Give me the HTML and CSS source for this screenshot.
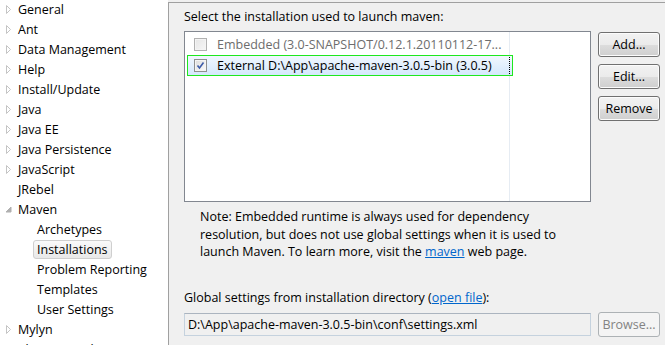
FILE: index.html
```html
<!DOCTYPE html>
<html>
<head>
<meta charset="utf-8">
<link rel="stylesheet" href="styles.css">
</head>
<body>
<div class="window">
  <div class="tree">
    <div class="row l0"><span class="tw"><svg width="6" height="9" viewBox="0 0 6 9"><path d="M1.5 0.5 L5.5 4.5 L1.5 8.5 Z" fill="none" stroke="#c4c4c4"/></svg></span><span class="lbl">General</span></div>
    <div class="row l0"><span class="tw"><svg width="6" height="9" viewBox="0 0 6 9"><path d="M1.5 0.5 L5.5 4.5 L1.5 8.5 Z" fill="none" stroke="#c4c4c4"/></svg></span><span class="lbl">Ant</span></div>
    <div class="row l0"><span class="tw"><svg width="6" height="9" viewBox="0 0 6 9"><path d="M1.5 0.5 L5.5 4.5 L1.5 8.5 Z" fill="none" stroke="#c4c4c4"/></svg></span><span class="lbl">Data Management</span></div>
    <div class="row l0"><span class="tw"><svg width="6" height="9" viewBox="0 0 6 9"><path d="M1.5 0.5 L5.5 4.5 L1.5 8.5 Z" fill="none" stroke="#c4c4c4"/></svg></span><span class="lbl">Help</span></div>
    <div class="row l0"><span class="tw"><svg width="6" height="9" viewBox="0 0 6 9"><path d="M1.5 0.5 L5.5 4.5 L1.5 8.5 Z" fill="none" stroke="#c4c4c4"/></svg></span><span class="lbl">Install/Update</span></div>
    <div class="row l0"><span class="tw"><svg width="6" height="9" viewBox="0 0 6 9"><path d="M1.5 0.5 L5.5 4.5 L1.5 8.5 Z" fill="none" stroke="#c4c4c4"/></svg></span><span class="lbl">Java</span></div>
    <div class="row l0"><span class="tw"><svg width="6" height="9" viewBox="0 0 6 9"><path d="M1.5 0.5 L5.5 4.5 L1.5 8.5 Z" fill="none" stroke="#c4c4c4"/></svg></span><span class="lbl">Java EE</span></div>
    <div class="row l0"><span class="tw"><svg width="6" height="9" viewBox="0 0 6 9"><path d="M1.5 0.5 L5.5 4.5 L1.5 8.5 Z" fill="none" stroke="#c4c4c4"/></svg></span><span class="lbl">Java Persistence</span></div>
    <div class="row l0"><span class="tw"><svg width="6" height="9" viewBox="0 0 6 9"><path d="M1.5 0.5 L5.5 4.5 L1.5 8.5 Z" fill="none" stroke="#c4c4c4"/></svg></span><span class="lbl">JavaScript</span></div>
    <div class="row l0"><span class="tw"></span><span class="lbl">JRebel</span></div>
    <div class="row l0"><span class="tw"><svg width="7" height="7" viewBox="0 0 7 7"><path d="M6 1 L6 6 L1 6 Z" fill="#b0b0b0" stroke="#b0b0b0" stroke-linejoin="round"/></svg></span><span class="lbl">Maven</span></div>
    <div class="row l1"><span class="lbl">Archetypes</span></div>
    <div class="row l1"><span class="lbl sel">Installations</span></div>
    <div class="row l1"><span class="lbl">Problem Reporting</span></div>
    <div class="row l1"><span class="lbl">Templates</span></div>
    <div class="row l1"><span class="lbl">User Settings</span></div>
    <div class="row l0"><span class="tw"><svg width="6" height="9" viewBox="0 0 6 9"><path d="M1.5 0.5 L5.5 4.5 L1.5 8.5 Z" fill="none" stroke="#c4c4c4"/></svg></span><span class="lbl">Mylyn</span></div>
    <div class="row l0"><span class="tw"><svg width="6" height="9" viewBox="0 0 6 9"><path d="M1.5 0.5 L5.5 4.5 L1.5 8.5 Z" fill="none" stroke="#c4c4c4"/></svg></span><span class="lbl">Plug-in Development</span></div>
  </div>
  <div class="panel">
    <div class="label">Select the installation used to launch maven:</div>
    <div class="inst">
      <div class="list">
        <div class="col">
          <div class="item">
            <span class="cb dis"></span>
            <span class="itext dim">Embedded (3.0-SNAPSHOT/0.12.1.20110112-17...</span>
          </div>
          <div class="item selected">
            <span class="cb"><svg width="11" height="11" viewBox="0 0 11 11"><path d="M2.5 5.5 L4.5 8 L8.5 2.5" fill="none" stroke="#3c5ba8" stroke-width="1.6"/></svg></span>
            <span class="itext">External D:\App\apache-maven-3.0.5-bin (3.0.5)</span>
          </div>
        </div>
      </div>
      <div class="buttons">
        <div class="btn">Add...</div>
        <div class="btn">Edit...</div>
        <div class="btn">Remove</div>
      </div>
    </div>
    <p class="note">Note: Embedded runtime is always used for dependency<br>resolution, but does not use global settings when it is used to<br>launch Maven. To learn more, visit the <a class="link">maven</a> web page.</p>
    <div class="label2">Global settings from installation directory (<a class="link">open file</a>):</div>
    <div class="field-row">
      <div class="field">D:\App\apache-maven-3.0.5-bin\conf\settings.xml</div>
      <div class="btn disabled">Browse...</div>
    </div>
  </div>
</div>
</body>
</html>
```

FILE: styles.css
```css
html, body {
  margin: 0;
  padding: 0;
}
body {
  width: 665px;
  height: 345px;
  overflow: hidden;
  background: #f0f0f0;
  font-family: "Open Sans", "Noto Sans", sans-serif;
  font-size: 12.5px;
  color: #000;
}
.window {
  display: flex;
  height: 345px;
}
.tree {
  width: 168px;
  flex: none;
  background: #fff;
  margin-top: -1px;
}
.row {
  height: 20px;
  display: flex;
  align-items: center;
  white-space: nowrap;
}
.tw {
  width: 18px;
  flex: none;
  display: flex;
  align-items: center;
  padding-left: 5px;
  box-sizing: border-box;
}
.l1 {
  padding-left: 33px;
}
.l1 .lbl {
  padding: 0 3px;
  border: 1px solid transparent;
  line-height: 17px;
}
.lbl.sel {
  border: 1px solid #cfcfcf;
  border-radius: 3px;
  background: linear-gradient(#fafafa, #e8e8e8);
}
.panel {
  flex: 1;
  margin-top: 2px;
  border-top: 1px solid #a0a0a0;
  border-left: 1px solid #a0a0a0;
  padding-left: 15px;
}
.label {
  margin-top: 6px;
  line-height: 16px;
}
.inst {
  display: flex;
  margin-top: 6px;
}
.list {
  width: 407px;
  height: 171px;
  box-sizing: border-box;
  border: 1px solid #828790;
  background: #fff;
  flex: none;
}
.col {
  width: 325px;
  height: 100%;
  border-right: 1px solid #e6ecf3;
  padding-top: 2px;
  box-sizing: border-box;
}
.item {
  width: 326px;
  height: 21px;
  margin-left: 2px;
  box-sizing: border-box;
  border: 1px solid transparent;
  display: flex;
  align-items: center;
  white-space: nowrap;
}
.item.selected {
  border-color: #1ee81e;
  background: linear-gradient(#f1f7fe, #d5e8fc);
  position: relative;
}
.item.selected::after {
  content: "";
  position: absolute;
  right: 2px;
  top: 1px;
  bottom: 1px;
  border-right: 1px dotted #000;
}
.cb {
  width: 13px;
  height: 13px;
  flex: none;
  box-sizing: border-box;
  margin-left: 6px;
  margin-right: 10px;
  border: 1px solid #8e8f8f;
  background: linear-gradient(135deg, #dcdcdc, #fbfbfb);
  box-shadow: inset 0 0 0 1px #f4f4f4;
  display: flex;
  align-items: center;
  justify-content: center;
}
.cb.dis {
  border-color: #b1b1b1;
  background: linear-gradient(135deg, #e6e6e6, #f6f6f6);
}
.dim {
  color: #6d6d6d;
}
.buttons {
  display: flex;
  flex-direction: column;
  gap: 7px;
  margin-left: 7px;
  margin-top: 1px;
}
.btn {
  width: 62px;
  height: 25px;
  box-sizing: border-box;
  border: 1px solid #707070;
  border-radius: 3px;
  background: linear-gradient(#f2f2f2 0%, #ebebeb 50%, #dddddd 51%, #cfcfcf 100%);
  box-shadow: inset 0 0 0 1px #fcfcfc;
  display: flex;
  align-items: center;
  justify-content: center;
}
.btn.disabled {
  border-color: #adb2b5;
  background: #f4f4f4;
  color: #838383;
  box-shadow: none;
}
.note {
  margin: 6px 0 0 16px;
  line-height: 17.5px;
}
.link {
  color: #0066cc;
  text-decoration: underline;
}
.label2 {
  margin-top: 29px;
  line-height: 16px;
}
.field-row {
  display: flex;
  align-items: center;
  margin-top: 6px;
  height: 25px;
}
.field {
  width: 407px;
  height: 23px;
  box-sizing: border-box;
  border: 1px solid #c5d2de;
  border-top-color: #abb4bf;
  background: #f0f0f0;
  padding-left: 3px;
  display: flex;
  align-items: center;
  flex: none;
}
.field-row .btn {
  margin-left: 7px;
}
```
